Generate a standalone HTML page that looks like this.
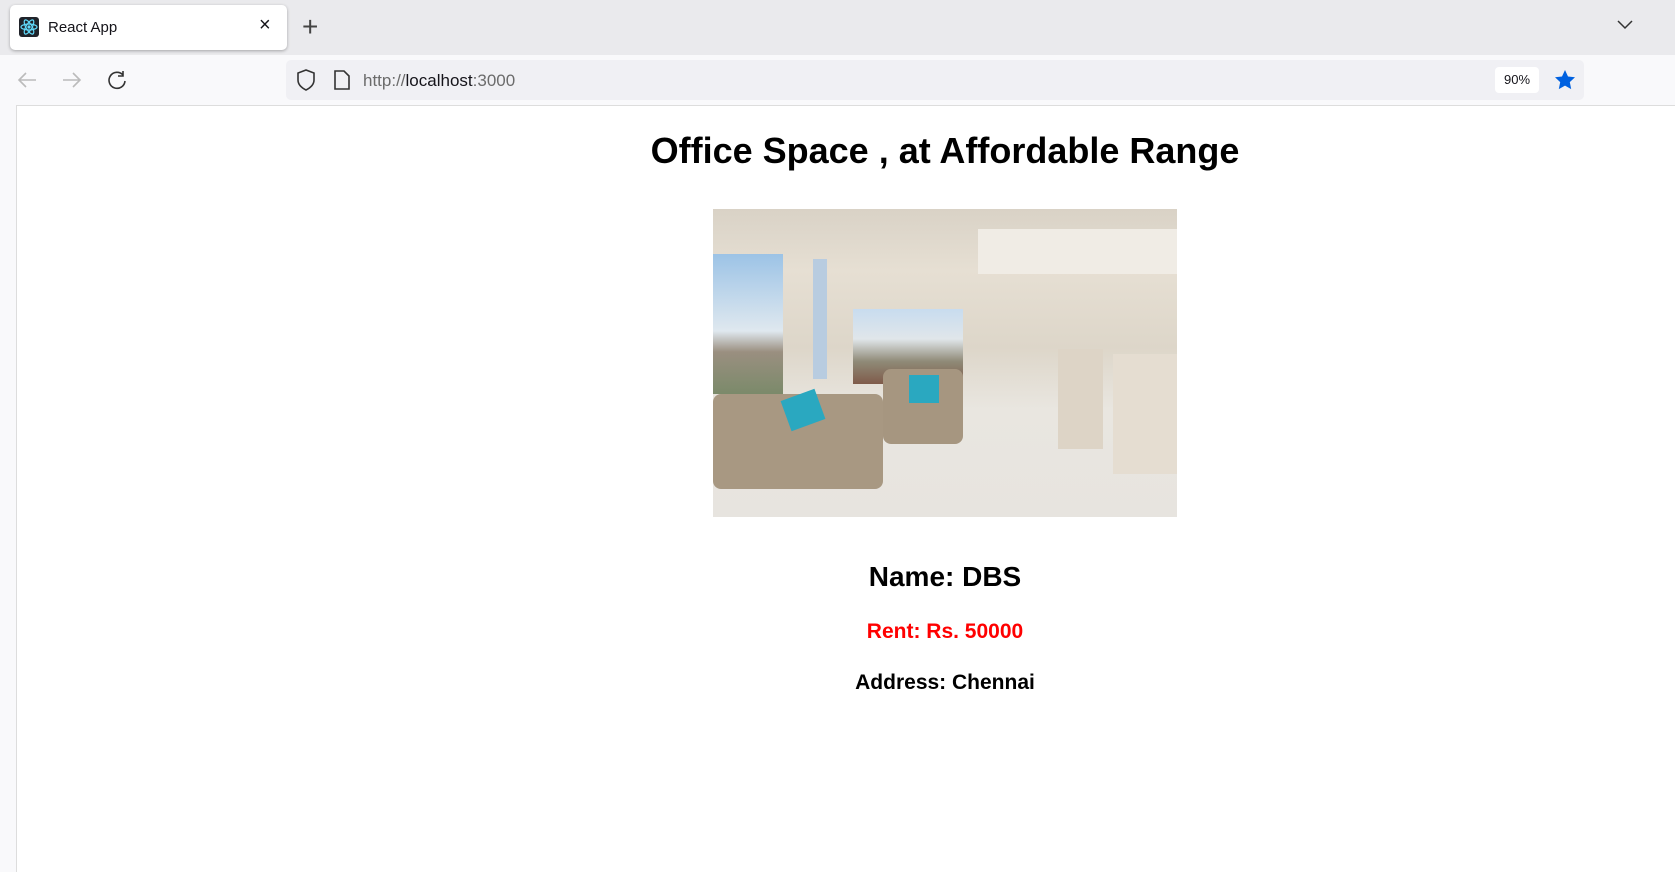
<!DOCTYPE html>
<html><head><style>
body{margin:0;width:1675px;height:871px;overflow:hidden;background:#f9f9fb;font-family:"Liberation Sans",Arial,sans-serif;position:relative}
.tabbar{position:absolute;left:0;top:0;width:1675px;height:55px;background:#eaeaed}
.tab{position:absolute;left:10px;top:5px;width:277px;height:45px;background:#fff;border-radius:5px;box-shadow:0 1px 3px rgba(0,0,0,.3)}
.tool{position:absolute;left:0;top:55px;width:1675px;height:50px;background:#f9f9fb}
.url{position:absolute;left:286px;top:60px;width:1298px;height:40px;background:#f0f0f4;border-radius:5px}
.content{position:absolute;left:16px;top:105px;width:1659px;height:766px;background:#fff;border-top:1px solid #ddd;border-left:1px solid #ddd;overflow:hidden}
.c{position:absolute;left:0;width:1856px;text-align:center;font-weight:bold}
</style></head><body>
<div class="tabbar">
 <div class="tab">
  <div style="position:absolute;left:9px;top:12px;width:20px;height:20px;background:#20232a;border-radius:3px"></div>
  <svg style="position:absolute;left:9px;top:12px" width="20" height="20" viewBox="0 0 20 20"><g fill="none" stroke="#61dafb" stroke-width="1.2"><ellipse cx="10" cy="10" rx="8" ry="3"/><ellipse cx="10" cy="10" rx="8" ry="3" transform="rotate(60 10 10)"/><ellipse cx="10" cy="10" rx="8" ry="3" transform="rotate(120 10 10)"/></g><circle cx="10" cy="10" r="1.6" fill="#61dafb"/></svg>
  <span style="position:absolute;left:38px;top:14px;font-size:15px;color:#15141a">React App</span>
  <span style="position:absolute;left:249px;top:9px;font-size:20px;color:#15141a">×</span>
 </div>
 <span style="position:absolute;left:302px;top:11px;font-size:28px;color:#444;font-weight:300">+</span>
 <svg style="position:absolute;left:1617px;top:20px" width="16" height="10"><path d="M1 1l7 7 7-7" stroke="#333" stroke-width="1.5" fill="none"/></svg>
</div>
<div class="tool">
 <svg style="position:absolute;left:16px;top:14px" width="22" height="22"><path d="M20 11H3M10 4l-7 7 7 7" stroke="#bbb" stroke-width="1.6" fill="none"/></svg>
 <svg style="position:absolute;left:61px;top:14px" width="22" height="22"><path d="M2 11h17M12 4l7 7-7 7" stroke="#bbb" stroke-width="1.6" fill="none"/></svg>
 <svg style="position:absolute;left:106px;top:14px" width="22" height="22"><path d="M17 6A8 8 0 1 0 19 12M17 2v5h-5" stroke="#333" stroke-width="1.6" fill="none"/></svg>
</div>
<div class="url">
 <svg style="position:absolute;left:9px;top:8px" width="22" height="24"><path d="M11 2L3 5v7c0 5 4 8 8 10 4-2 8-5 8-10V5z" stroke="#333" stroke-width="1.6" fill="none"/></svg>
 <svg style="position:absolute;left:47px;top:9px" width="18" height="22"><path d="M2 2h9l5 5v13H2z" stroke="#333" stroke-width="1.6" fill="none"/></svg>
 <span style="position:absolute;left:77px;top:11px;font-size:17px;color:#6b6b6b">http://<span style="color:#15141a">localhost</span>:3000</span>
 <div style="position:absolute;left:1209px;top:7px;width:44px;height:26px;background:#fff;border-radius:4px;font-size:13px;text-align:center;line-height:26px;color:#15141a">90%</div>
 <svg style="position:absolute;left:1267px;top:8px" width="24" height="24" viewBox="0 0 24 24"><path d="M12 2l3 6.5 7 .8-5.2 4.8 1.4 7L12 17.6 5.8 21.1l1.4-7L2 9.3l7-.8z" fill="#0061e0"/></svg>
</div>
<div class="content">
 <div class="c" style="top:24px;font-size:36px">Office Space , at Affordable Range</div>
 <div style="position:absolute;left:696px;top:103px;width:464px;height:308px;overflow:hidden;background:linear-gradient(180deg,#d9d2c6 0%,#e6dfd3 20%,#ddd6c9 45%,#e9e6e0 65%,#e7e4df 100%)">
  <div style="position:absolute;left:0;top:45px;width:70px;height:140px;background:linear-gradient(180deg,#9cc3e6,#dfe8ef 55%,#9a8f80 70%,#7b8a6a)"></div>
  <div style="position:absolute;left:100px;top:50px;width:14px;height:120px;background:#b8cce0"></div>
  <div style="position:absolute;left:140px;top:100px;width:110px;height:75px;background:linear-gradient(180deg,#c8dcef,#e0e6ea 40%,#8f8a77 70%,#7f5b4a)"></div>
  <div style="position:absolute;left:265px;top:20px;width:200px;height:45px;background:#f0ece5"></div>
  <div style="position:absolute;left:0;top:185px;width:170px;height:95px;background:#a89882;border-radius:8px"></div>
  <div style="position:absolute;left:170px;top:160px;width:80px;height:75px;background:#a69680;border-radius:8px"></div>
  <div style="position:absolute;left:72px;top:185px;width:36px;height:32px;background:#2aa8c0;transform:rotate(-20deg)"></div>
  <div style="position:absolute;left:196px;top:166px;width:30px;height:28px;background:#2aa8c0"></div>
  <div style="position:absolute;left:400px;top:145px;width:64px;height:120px;background:#e5ddd1"></div>
  <div style="position:absolute;left:345px;top:140px;width:45px;height:100px;background:#ddd4c6"></div>
 </div>
 <div class="c" style="top:455px;font-size:28px">Name: DBS</div>
 <div class="c" style="top:514px;font-size:21px;color:#ff0000">Rent: Rs. 50000</div>
 <div class="c" style="top:565px;font-size:21px">Address: Chennai</div>
</div>
</body></html>
